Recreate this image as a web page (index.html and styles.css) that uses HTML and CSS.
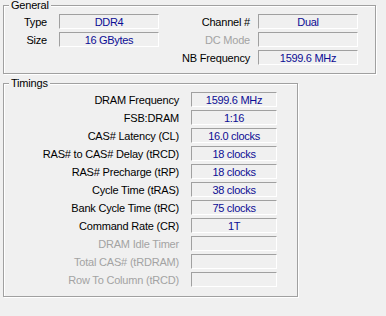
FILE: index.html
```html
<!DOCTYPE html>
<html>
<head>
<meta charset="utf-8">
<link rel="stylesheet" href="styles.css">
</head>
<body>
<div class="group general">
  <span class="legend">General</span>
  <div class="ggrid">
    <span class="lbl l1">Type</span>
    <span class="field">DDR4</span>
    <span class="lbl l2">Channel #</span>
    <span class="field">Dual</span>
    <span class="lbl l1">Size</span>
    <span class="field">16 GBytes</span>
    <span class="lbl l2 dis">DC Mode</span>
    <span class="field"></span>
    <span class="lbl l1"></span>
    <span class="empty"></span>
    <span class="lbl l2">NB Frequency</span>
    <span class="field">1599.6 MHz</span>
  </div>
</div>
<div class="group timings">
  <span class="legend">Timings</span>
  <div class="tgrid">
    <span class="lbl">DRAM Frequency</span><span class="field">1599.6 MHz</span>
    <span class="lbl">FSB:DRAM</span><span class="field">1:16</span>
    <span class="lbl">CAS# Latency (CL)</span><span class="field">16.0 clocks</span>
    <span class="lbl">RAS# to CAS# Delay (tRCD)</span><span class="field">18 clocks</span>
    <span class="lbl">RAS# Precharge (tRP)</span><span class="field">18 clocks</span>
    <span class="lbl">Cycle Time (tRAS)</span><span class="field">38 clocks</span>
    <span class="lbl">Bank Cycle Time (tRC)</span><span class="field">75 clocks</span>
    <span class="lbl">Command Rate (CR)</span><span class="field">1T</span>
    <span class="lbl dis">DRAM Idle Timer</span><span class="field"></span>
    <span class="lbl dis">Total CAS# (tRDRAM)</span><span class="field"></span>
    <span class="lbl dis">Row To Column (tRCD)</span><span class="field"></span>
  </div>
</div>
</body>
</html>
```
FILE: styles.css
```css
html, body {
  margin: 0;
  padding: 0;
  background: #f0f0f0;
}
body {
  font-family: "Liberation Sans", Arial, sans-serif;
  font-size: 11px;
  color: #000;
  width: 386px;
  height: 316px;
  overflow: hidden;
}
.group {
  position: relative;
  box-sizing: border-box;
  border: 1px solid #a0a0a0;
  box-shadow: 1px 1px 0 #fff, inset 1px 1px 0 #fff;
}
.general {
  margin: 5px 0 0 3px;
  width: 373px;
  height: 69px;
}
.timings {
  margin: 9px 0 0 3px;
  width: 295px;
  height: 214px;
}
.legend {
  position: absolute;
  left: 5px;
  top: -8px;
  padding: 0 2px 0 2px;
  background: #f0f0f0;
  line-height: 14px;
  letter-spacing: -0.2px;
}
.ggrid {
  display: grid;
  grid-template-columns: 55px 100px 99px 100px;
  grid-auto-rows: 15px;
  row-gap: 3px;
  padding-top: 8px;
}
.tgrid {
  display: grid;
  grid-template-columns: 187px 86px;
  grid-auto-rows: 15px;
  row-gap: 3px;
  padding-top: 8px;
}
.lbl {
  text-align: right;
  line-height: 16px;
  white-space: nowrap;
  padding-right: 12px;
  letter-spacing: -0.2px;
}
.l2 {
  padding-right: 8px;
}
.dis {
  color: #a3a3a3;
}
.field {
  box-sizing: border-box;
  border-top: 1px solid #a0a0a0;
  border-left: 1px solid #a0a0a0;
  border-bottom: 1px solid #fff;
  border-right: 1px solid #fff;
  text-align: center;
  color: #0c0c94;
  line-height: 14px;
  white-space: nowrap;
  letter-spacing: -0.3px;
}
```
